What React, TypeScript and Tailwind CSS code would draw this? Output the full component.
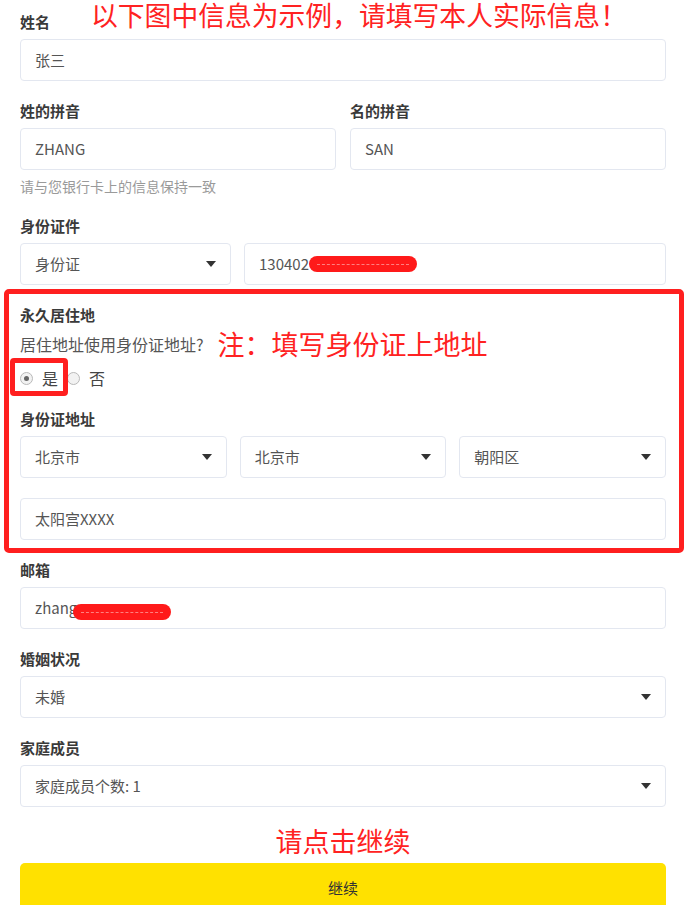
import type { ReactNode } from "react";

const font = "font-['Noto_Sans_CJK_SC','Noto_Sans',sans-serif]";

function Label({ children }: { children: ReactNode }) {
    return <div className="h-5 leading-5 text-[15px] font-bold text-[#3a3a3a] mb-[7px]">{children}</div>;
}

function Box({ children, className = "" }: { children?: ReactNode; className?: string }) {
    return (
        <div className={`h-[42px] border border-[#e3e7f0] rounded-[4px] bg-white flex items-center px-[14px] text-[15px] text-[#555] ${className}`}>
            {children}
        </div>
    );
}

function Caret() {
    return (
        <svg width="10" height="6" viewBox="0 0 10 6" className="ml-auto shrink-0">
            <path d="M0 0h10L5 6z" fill="#333" />
        </svg>
    );
}

function Select({ value, className = "" }: { value: string; className?: string }) {
    return (
        <Box className={className}>
            <span>{value}</span>
            <Caret />
        </Box>
    );
}

function Redacted({ width }: { width: number }) {
    return (
        <span className="relative inline-flex items-center h-[16px] rounded-full bg-[#ff1a1a]" style={{ width }}>
            <span className="mx-[8px] flex-1 border-t border-dashed border-[#ff8080]" />
        </span>
    );
}

function Radio({ checked, label }: { checked?: boolean; label: string }) {
    return (
        <span className="flex items-center gap-[9px]">
            <span className="w-[13px] h-[13px] rounded-full border border-[#b9b9b9] bg-[#f2f2f2] flex items-center justify-center">
                {checked && <span className="w-[5px] h-[5px] rounded-full bg-[#666]" />}
            </span>
            <span className="text-[16px] text-[#444]">{label}</span>
        </span>
    );
}

export default function App() {
    return (
        <div className={`relative w-[691px] h-[905px] overflow-hidden bg-white pl-5 pr-[25px] pt-3 ${font}`}>
            <div className="absolute left-[91px] top-0 text-[26.8px] leading-[30px] text-[#ff2222] whitespace-nowrap">
                以下图中信息为示例，请填写本人实际信息！
            </div>

            <Label>姓名</Label>
            <Box>张三</Box>

            <div className="grid grid-cols-2 gap-[14px] mt-5">
                <div>
                    <Label>姓的拼音</Label>
                    <Box>ZHANG</Box>
                </div>
                <div>
                    <Label>名的拼音</Label>
                    <Box>SAN</Box>
                </div>
            </div>
            <div className="mt-[6px] h-5 leading-5 text-[14px] text-[#9a9a9a]">请与您银行卡上的信息保持一致</div>

            <div className="mt-5">
                <Label>身份证件</Label>
                <div className="flex gap-[13px]">
                    <Select value="身份证" className="w-[211px] shrink-0" />
                    <Box className="flex-1">
                        <span>130402</span>
                        <Redacted width={108} />
                    </Box>
                </div>
            </div>

            <div className="relative mt-5">
                <div className="absolute left-[-16px] right-[-18px] top-[-16px] bottom-[-13px] border-[5px] border-[#ff1f1f] rounded-[5px] pointer-events-none" />
                <Label>永久居住地</Label>
                <div className="flex items-center h-7 -mt-[2px]">
                    <span className="text-[16px] text-[#555]">居住地址使用身份证地址?</span>
                    <span className="ml-[14px] text-[27px] leading-[32px] text-[#ff2222]">注：填写身份证上地址</span>
                </div>
                <div className="relative flex items-center gap-[9px] h-5 mt-[10px]">
                    <div className="absolute left-[-10px] top-[-10px] w-[58px] h-[38px] border-[5px] border-[#ff1f1f] rounded-[4px]" />
                    <Radio checked label="是" />
                    <Radio label="否" />
                </div>

                <div className="mt-[21px]">
                    <Label>身份证地址</Label>
                    <div className="grid grid-cols-3 gap-[13px]">
                        <Select value="北京市" />
                        <Select value="北京市" />
                        <Select value="朝阳区" />
                    </div>
                </div>
                <Box className="mt-5">太阳宫XXXX</Box>
            </div>

            <div className="mt-5">
                <Label>邮箱</Label>
                <Box>
                    <span>zhang</span>
                    <span className="-ml-[4px]">
                        <Redacted width={98} />
                    </span>
                </Box>
            </div>

            <div className="mt-5">
                <Label>婚姻状况</Label>
                <Select value="未婚" />
            </div>

            <div className="mt-5">
                <Label>家庭成员</Label>
                <Select value="家庭成员个数: 1" />
            </div>

            <div className="mt-[18px] text-center text-[27px] leading-[32px] text-[#ff2222]">请点击继续</div>

            <button className="mt-[6px] w-full h-[50px] rounded-t-[5px] bg-[#ffe100] text-[15px] text-[#333]">继续</button>
        </div>
    );
}
